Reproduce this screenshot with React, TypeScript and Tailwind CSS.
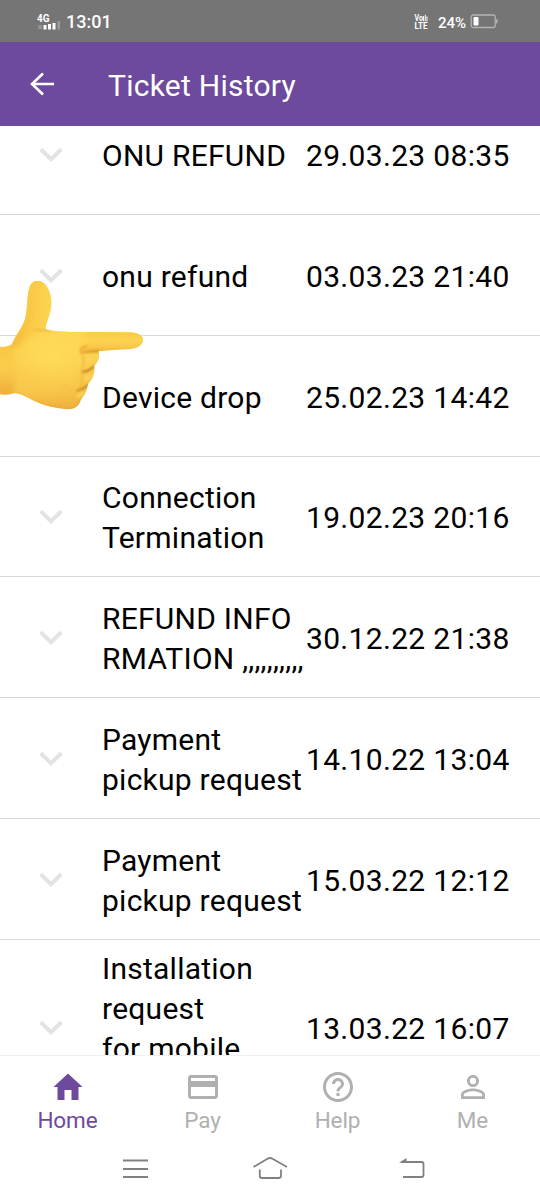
import { MdCreditCard, MdHelpOutline, MdPersonOutline } from 'react-icons/md';

const tickets = [
    { title: ['ONU REFUND'], date: '29.03.23 08:35' },
    { title: ['onu refund'], date: '03.03.23 21:40' },
    { title: ['Device drop'], date: '25.02.23 14:42' },
    { title: ['Connection', 'Termination'], date: '19.02.23 20:16' },
    { title: ['REFUND INFO', 'RMATION ,,,,,,,,,,'], date: '30.12.22 21:38' },
    { title: ['Payment', 'pickup request'], date: '14.10.22 13:04' },
    { title: ['Payment', 'pickup request'], date: '15.03.22 12:12' },
    { title: ['Installation', 'request', 'for mobile'], date: '13.03.22 16:07', tall: true },
];

function StatusBar() {
    return (
        <div className="flex h-[42px] shrink-0 items-center bg-[#757575] pl-[37px] text-white">
            <svg width="25" height="18" viewBox="0 0 25 18" className="mt-px">
                <text x="0" y="8.5" fontSize="10" fontWeight="700" fill="#fff" textLength="12.5" lengthAdjust="spacingAndGlyphs">4G</text>
                <rect x="1" y="12" width="4" height="4" fill="#929292" />
                <rect x="6.5" y="12" width="3" height="4.5" fill="#fff" />
                <rect x="11" y="11" width="3" height="5.5" fill="#fff" />
                <rect x="15.5" y="10" width="3" height="6.5" fill="#fff" />
                <rect x="20.5" y="8" width="2.5" height="8.5" fill="#9a9a9a" />
            </svg>
            <span className="ml-[4px] pt-[2px] text-[18px] leading-none font-medium">13:01</span>
            <div className="mr-[42px] ml-auto flex items-center pt-px">
                <svg width="14" height="16" viewBox="0 0 14 16">
                    <text x="0.5" y="7.3" fontSize="8.5" fontWeight="700" fill="#fff" textLength="8.5" lengthAdjust="spacingAndGlyphs">Vo</text>
                    <path d="M9.6 7.3V2M11.3 7.3V.8M13 7.3V2.5" stroke="#fff" strokeWidth="1" />
                    <text x="0.5" y="15" fontSize="8.5" fontWeight="700" fill="#fff" textLength="13" lengthAdjust="spacingAndGlyphs">LTE</text>
                </svg>
                <span className="ml-[10px] pt-[4px] text-[15px] leading-none font-medium">24%</span>
                <svg width="28" height="15" viewBox="0 0 28 15" className="ml-1">
                    <rect x="1.2" y="1" width="24" height="12.5" rx="2" fill="none" stroke="#b4b4b4" strokeWidth="1.3" />
                    <rect x="3.5" y="3" width="5" height="8.5" rx="1" fill="#fff" />
                    <rect x="26" y="5" width="1.5" height="4.5" rx=".7" fill="#b4b4b4" />
                </svg>
            </div>
        </div>
    );
}

function Header() {
    return (
        <header className="flex h-[84px] shrink-0 items-center bg-[#6e4a9e] pl-[30px] text-white">
            <svg width="24" height="24" viewBox="0 0 24 24" fill="none" stroke="#fff" strokeWidth="2.6">
                <path d="M24 12H2M13 1.5L2 12l11 10.5" />
            </svg>
            <h1 className="ml-[54px] pt-[3px] text-[30px] leading-none tracking-[0.25px]">Ticket History</h1>
        </header>
    );
}

function TicketList() {
    return (
        <main className="h-[929px] shrink-0 overflow-hidden">
            <ul className="-mt-[31.8px]">
                {tickets.map((ticket) => (
                    <li
                        key={ticket.date}
                        className={`flex items-center border-b border-[#d9d9d9] pt-[2px] ${ticket.tall ? 'h-[176px]' : 'h-[120.8px]'}`}
                    >
                        <svg width="24" height="16" viewBox="0 0 24 16" fill="none" stroke="#e3e3e3" strokeWidth="4" className="ml-[39px] shrink-0">
                            <path d="M1.7 2.2L12 12.2 22.3 2.2" />
                        </svg>
                        <div className={`ml-[39px] w-[204px] shrink-0 pt-[2px] text-[30px] leading-[40px] tracking-[0.25px] whitespace-nowrap ${ticket.tall ? 'mb-[40px]' : ''}`}>
                            {ticket.title.map((line) => (
                                <p key={line}>{line}</p>
                            ))}
                        </div>
                        <p className="pt-[2px] text-[30px] leading-[40px] tracking-[0.32px] whitespace-nowrap">{ticket.date}</p>
                    </li>
                ))}
            </ul>
        </main>
    );
}

// Hand coming in from the left edge, pointing right over the list
function PointingHand() {
    return (
        <svg width="150" height="140" viewBox="0 75 450 420" className="absolute top-[275px] left-0">
            <defs>
                <linearGradient id="skin" x1="0.4" y1="0" x2="0.5" y2="1">
                    <stop offset="0" stopColor="#fbcf48" />
                    <stop offset="0.45" stopColor="#fdd653" />
                    <stop offset="0.8" stopColor="#f9c84b" />
                    <stop offset="1" stopColor="#edab38" />
                </linearGradient>
                <linearGradient id="finger" x1="0" y1="0" x2="0" y2="1">
                    <stop offset="0" stopColor="#f8c843" />
                    <stop offset="0.4" stopColor="#fdd552" />
                    <stop offset="0.75" stopColor="#f9c746" />
                    <stop offset="1" stopColor="#eeae37" />
                </linearGradient>
                <linearGradient id="thumb" x1="0" y1="0" x2="1" y2="0.15">
                    <stop offset="0" stopColor="#efa832" />
                    <stop offset="0.45" stopColor="#f9c743" />
                    <stop offset="1" stopColor="#fdd653" />
                </linearGradient>
                <linearGradient id="wrist" x1="0" y1="0" x2="0" y2="1">
                    <stop offset="0" stopColor="#f8c441" />
                    <stop offset="0.5" stopColor="#fbcd4c" />
                    <stop offset="1" stopColor="#ecaa37" />
                </linearGradient>
                <radialGradient id="glow">
                    <stop offset="0" stopColor="#fedb58" />
                    <stop offset="1" stopColor="#fedb58" stopOpacity="0" />
                </radialGradient>
                <filter id="soft" x="-20%" y="-20%" width="140%" height="140%">
                    <feGaussianBlur stdDeviation="3" />
                </filter>
                <filter id="softer" x="-60%" y="-30%" width="220%" height="160%">
                    <feGaussianBlur stdDeviation="9" />
                </filter>
                <clipPath id="hand">
                    <path d="M0 290Q22 293 36 283C46 254 66 238 76 204C84 168 80 126 92 104C102 88 124 88 139 107C158 134 157 171 147 198C141 216 137 225 137 237C154 244 183 243 213 246L390 247C420 248 433 262 428 276C422 292 399 298 370 298L297 303C299 324 295 335 283 348C286 369 278 389 264 402C262 421 254 434 242 451C236 470 219 481 199 477C159 473 128 466 97 450C80 441 64 432 45 429Q24 436 0 433Z" />
                </clipPath>
            </defs>
            <g clipPath="url(#hand)">
                <rect x="0" y="80" width="450" height="410" fill="url(#skin)" />
                <path d="M-40 270H38Q52 350 42 440H-40Z" fill="url(#wrist)" filter="url(#softer)" />
                <path d="M70 80H165V215Q135 222 132 240Q105 250 70 285L25 290C59 243 70 227 76 204Z" fill="url(#thumb)" filter="url(#softer)" />
                <path d="M260 246H435V300L246 307Q236 280 260 246Z" fill="url(#finger)" filter="url(#soft)" />
                <path d="M76 190Q65 240 35 285" fill="none" stroke="#f3b138" strokeWidth="13" opacity="0.6" filter="url(#softer)" />
                <ellipse cx="165" cy="315" rx="125" ry="95" fill="url(#glow)" />
                <path d="M45 435Q130 479 207 483Q239 477 248 451" fill="none" stroke="#e9a232" strokeWidth="13" opacity="0.8" filter="url(#soft)" />
                <g filter="url(#soft)" fill="none" strokeLinecap="round">
                    <path d="M242 308Q239 293 260 289" stroke="#e99f28" strokeWidth="5" />
                    <path d="M249 307L295 303" stroke="#cd8425" strokeWidth="4" />
                    <path d="M245 366Q261 366 281 350" stroke="#bd7623" strokeWidth="6" />
                    <path d="M232 422Q249 419 263 404" stroke="#c57c22" strokeWidth="6" />
                    <path d="M245 308Q257 341 244 364M245 367Q253 396 233 419" stroke="#f2b83f" strokeWidth="5" />
                    <path d="M103 238Q124 242 150 241" stroke="#edad38" strokeWidth="4" />
                    <path d="M187 405Q210 410 223 437" stroke="#f5bf47" strokeWidth="4" />
                    <path d="M262 329L278 322M257 385L269 377M235 439L246 429" stroke="#fcd55b" strokeWidth="9" />
                </g>
            </g>
        </svg>
    );
}

function BottomTabs() {
    return (
        <nav className="grid h-[85px] shrink-0 grid-cols-4 border-t border-[#f0f0f0] bg-white text-[22.5px] leading-none tracking-[-0.1px] text-[#b0b0b0]">
            <div className="flex flex-col items-center pt-[13px] text-[#6e4a9e]">
                <svg width="36" height="36" viewBox="0 0 36 36" fill="currentColor">
                    <path d="M18 4.5L32.5 18H28.5V31H21.5V21H14.5V31H7.5V18H3.5Z" />
                </svg>
                <span className="mt-[4px]">Home</span>
            </div>
            <div className="flex flex-col items-center pt-[13px]">
                <MdCreditCard size={36} />
                <span className="mt-[4px]">Pay</span>
            </div>
            <div className="flex flex-col items-center pt-[13px]">
                <MdHelpOutline size={36} />
                <span className="mt-[4px]">Help</span>
            </div>
            <div className="flex flex-col items-center pt-[13px]">
                <MdPersonOutline size={36} />
                <span className="mt-[4px]">Me</span>
            </div>
        </nav>
    );
}

function SystemNav() {
    return (
        <div className="flex h-[60px] shrink-0 items-start bg-white pt-[16px] pl-[122px]">
            <svg width="26" height="26" viewBox="0 0 26 26" stroke="#808080" strokeWidth="1.8">
                <path d="M1 4.5H26M1 13H26M1 21H26" />
            </svg>
            <svg width="38" height="26" viewBox="0 0 38 26" fill="none" stroke="#808080" strokeWidth="1.8" className="ml-[103px]">
                <path d="M2.5 11L16.5 2.7Q19 1.3 21.5 2.7L36 11M8.8 13.5V20Q8.8 22 11 22H27.5Q30 22 30 20V13.5" />
            </svg>
            <svg width="28" height="26" viewBox="0 0 28 26" fill="none" stroke="#808080" strokeWidth="1.8" className="ml-[109px]">
                <path d="M3 6H23.5Q25.5 6 25.5 8V19Q25.5 21 23.5 21H5" />
                <path d="M1 6.7L8.5 2V6.7Z" fill="#808080" stroke="none" />
            </svg>
        </div>
    );
}

export default function App() {
    return (
        <div className="relative flex h-[1200px] w-[540px] flex-col overflow-hidden bg-white font-[Roboto,sans-serif] text-black">
            <StatusBar />
            <Header />
            <TicketList />
            <BottomTabs />
            <SystemNav />
            <PointingHand />
        </div>
    );
}
